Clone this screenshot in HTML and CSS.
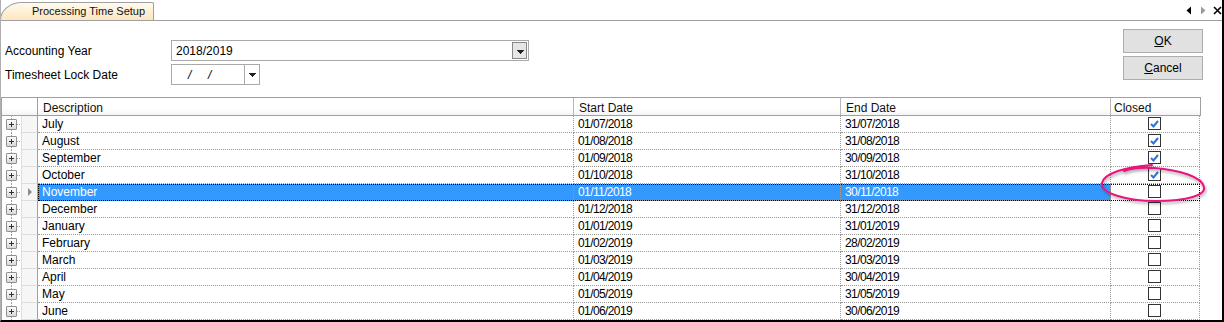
FILE: index.html
```html
<!DOCTYPE html>
<html lang="en">
    <head>
        <meta charset="UTF-8">
        <title>Processing Time Setup</title>
        <link rel="stylesheet" href="styles.css">
    </head>
    <body>
        <div class="window">
            <div class="tabbar">
                <div class="tab">Processing Time Setup</div>
                <div class="tab-nav">
                    <svg width="8" height="9" viewBox="0 0 8 9"><path d="M6 0.5 L1.5 4.5 L6 8.5 Z" fill="#000"/></svg>
                    <svg width="8" height="9" viewBox="0 0 8 9"><path d="M2 0.5 L6.5 4.5 L2 8.5 Z" fill="#9a9a9a"/></svg>
                    <svg width="9" height="9" viewBox="0 0 9 9"><path d="M1 1 L8 8 M8 1 L1 8" stroke="#000" stroke-width="1.6"/></svg>
                </div>
            </div>

            <div class="form">
                <div class="fields">
                    <div class="field-row">
                        <label class="field-label">Accounting Year</label>
                        <div class="combo combo-year">
                            <span class="combo-text">2018/2019</span>
                            <span class="drop drop-boxed"></span>
                        </div>
                    </div>
                    <div class="field-row">
                        <label class="field-label">Timesheet Lock Date</label>
                        <div class="combo combo-date">
                            <span class="combo-text date-text">/&nbsp;&nbsp;&nbsp;&nbsp;&nbsp;/</span>
                            <span class="drop drop-split"></span>
                        </div>
                    </div>
                </div>
                <div class="buttons">
                    <button class="btn"><u>O</u>K</button>
                    <button class="btn"><u>C</u>ancel</button>
                </div>
            </div>

            <div class="grid">
                <div class="hdr">
                    <div class="tree"></div>
                    <div class="rh"></div>
                    <div class="hc desc">Description</div>
                    <div class="hc start">Start Date</div>
                    <div class="hc end">End Date</div>
                    <div class="hc closed">Closed</div>
                </div>
                <div id="rows"></div>
            </div>

            <svg class="annotation" width="130" height="60" viewBox="0 0 130 60">
                <defs>
                    <filter id="shadow" x="-20%" y="-40%" width="140%" height="180%">
                        <feDropShadow dx="1" dy="2" stdDeviation="1.5" flood-color="#000" flood-opacity="0.35"/>
                    </filter>
                </defs>
                <path filter="url(#shadow)" fill="none" stroke="#e8157c" stroke-width="2" stroke-linecap="round"
                    d="M56 6 C30 8 8 14 6 24 C4 34 30 42 60 42 C92 42 110 36 108 28 C106 18 84 11 58 9 C46 8 34 10 28 12"/>
            </svg>
        </div>

        <script>
        // Rows of the grid
        const months = [
            ['July', '01/07/2018', '31/07/2018', true],
            ['August', '01/08/2018', '31/08/2018', true],
            ['September', '01/09/2018', '30/09/2018', true],
            ['October', '01/10/2018', '31/10/2018', true],
            ['November', '01/11/2018', '30/11/2018', false],
            ['December', '01/12/2018', '31/12/2018', false],
            ['January', '01/01/2019', '31/01/2019', false],
            ['February', '01/02/2019', '28/02/2019', false],
            ['March', '01/03/2019', '31/03/2019', false],
            ['April', '01/04/2019', '30/04/2019', false],
            ['May', '01/05/2019', '31/05/2019', false],
            ['June', '01/06/2019', '30/06/2019', false]
        ];
        const selected = 4;
        const check = '<svg width="9" height="8" viewBox="0 0 9 8"><path d="M1 4 L3.5 6.5 L8 1" fill="none" stroke="#2b73d6" stroke-width="2"/></svg>';

        const rows = document.getElementById('rows');
        months.forEach((m, i) => {
            const row = document.createElement('div');
            row.className = 'row' + (i === selected ? ' selected' : '');
            row.innerHTML =
                '<div class="tree"><span class="exp"></span></div>' +
                '<div class="rh">' + (i === selected ? '<span class="pointer"></span>' : '') + '</div>' +
                '<div class="cells">' +
                    '<div class="c desc">' + m[0] + '</div>' +
                    '<div class="c start date">' + m[1] + '</div>' +
                    '<div class="c end date">' + m[2] + '</div>' +
                    '<div class="c closed"><span class="cb">' + (m[3] ? check : '') + '</span></div>' +
                '</div>';
            rows.appendChild(row);
        });
    </script>
    </body>
</html>
```

FILE: styles.css
```css
body {
    margin: 0;
    font-family: "Liberation Sans", Arial, sans-serif;
    font-size: 12px;
    color: #000;
    background: #fff;
}
.window {
    position: relative;
    width: 1224px;
    height: 322px;
    box-sizing: border-box;
    border-left: 1px solid #b0b0b0;
    border-right: 2px solid #000;
    border-bottom: 2px solid #000;
    overflow: hidden;
}

/* tab strip */
.tabbar {
    display: flex;
    align-items: flex-end;
    height: 20px;
    border-bottom: 1px solid #a0a0a0;
}
.tab {
    height: 17px;
    line-height: 17px;
    padding: 0 8px 0 31px;
    margin-left: -1px;
    border: 1px solid #a0a0a0;
    border-bottom: none;
    border-top-left-radius: 22px 18px;
    border-top-right-radius: 2px;
    background: linear-gradient(#fffaf0, #fde6bd);
    color: #111;
    font-size: 11px;
}
.tab-nav {
    margin-left: auto;
    align-self: center;
    display: flex;
    gap: 6px;
    align-items: center;
}

/* form */
.form {
    display: flex;
    height: 76px;
}
.fields {
    padding: 19px 0 0 4px;
    display: flex;
    flex-direction: column;
    gap: 3px;
}
.field-row {
    display: flex;
    align-items: center;
}
.field-label {
    width: 166px;
}
.combo {
    display: flex;
    align-items: center;
    height: 21px;
    box-sizing: border-box;
    border: 1px solid #a9a9a9;
    background: #fff;
}
.combo-year {
    width: 358px;
}
.combo-date {
    width: 89px;
}
.combo-text {
    flex: 1;
    padding-left: 4px;
}
.date-text {
    padding-left: 16px;
    font-style: italic;
}
.drop {
    width: 15px;
    height: 17px;
    margin-right: 1px;
    box-sizing: border-box;
    background: linear-gradient(#222, #222) 4px 7px / 7px 1px no-repeat,
        linear-gradient(#222, #222) 5px 8px / 5px 1px no-repeat,
        linear-gradient(#222, #222) 6px 9px / 3px 1px no-repeat,
        linear-gradient(#222, #222) 7px 10px / 1px 1px no-repeat;
}
.drop-boxed {
    border: 1px solid #888;
    background-color: #e6e6e6;
}
.drop-split {
    height: 19px;
    margin-right: 0;
    border-left: 1px solid #a9a9a9;
    background-position: 4px 8px, 5px 9px, 6px 10px, 7px 11px;
}
.buttons {
    margin-left: auto;
    margin-right: 19px;
    padding-top: 8px;
    display: flex;
    flex-direction: column;
    gap: 3px;
}
.btn {
    width: 80px;
    height: 24px;
    padding: 0;
    border: 1px solid #adadad;
    background: #e1e1e1;
    font-family: inherit;
    font-size: 12px;
    color: #000;
}

/* grid */
.grid {
    width: 1199px;
    border-left: 1px solid #a0a0a0;
}
.hdr {
    display: flex;
    height: 19px;
    box-sizing: border-box;
    border-top: 1px solid #a0a0a0;
    border-bottom: 1px solid #a0a0a0;
    border-right: 1px solid #a0a0a0;
    background: linear-gradient(#fff 60%, #f4f4f4);
}
.hdr .tree {
    width: 19px;
    background: none;
}
.hdr .rh {
    border-left: none;
    border-bottom: none;
    background: none;
}
.hc {
    box-sizing: border-box;
    padding: 3px 0 0 5px;
    border-right: 1px solid #b8b8b8;
    color: #111;
}
.hc.closed {
    border-right: none;
    padding-left: 3px;
}
.desc { width: 536px; }
.start { width: 267px; }
.end { width: 270px; }
.closed { width: 89px; }

.row {
    display: flex;
    height: 17px;
}
.tree {
    width: 19px;
    flex: none;
    background: repeating-linear-gradient(#a0a0a0 0 1px, transparent 1px 2px) 9px 0 / 1px 17px no-repeat,
        repeating-linear-gradient(90deg, #a0a0a0 0 1px, transparent 1px 2px) 15px 8px / 4px 1px no-repeat;
}
.exp {
    display: block;
    width: 11px;
    height: 11px;
    margin: 3px 0 0 4px;
    box-sizing: border-box;
    border: 1px solid #909090;
    border-radius: 1px;
    background: linear-gradient(#333, #333) 2px 4px / 5px 1px no-repeat,
        linear-gradient(#333, #333) 4px 2px / 1px 5px no-repeat,
        linear-gradient(#fdfdfd, #d9d9d9);
}
.rh {
    width: 17px;
    flex: none;
    box-sizing: border-box;
    border-left: 1px solid #dedede;
    border-right: 1px solid #a0a0a0;
    border-bottom: 1px solid #dcdcdc;
    background: #f6f6f6;
    display: flex;
    align-items: center;
    justify-content: center;
}
.pointer {
    width: 0;
    height: 0;
    border-top: 4px solid transparent;
    border-bottom: 4px solid transparent;
    border-left: 4px solid #8c8c8c;
}
.cells {
    display: flex;
}
.c {
    box-sizing: border-box;
    height: 17px;
    line-height: 17px;
    padding-left: 4px;
    border-right: 1px dotted #9a9a9a;
    border-bottom: 1px dotted #9a9a9a;
    white-space: nowrap;
}
.c.date {
    letter-spacing: -0.6px;
}
.c.closed {
    display: flex;
    justify-content: center;
    align-items: center;
    padding: 0 1px 1px 0;
}
.cb {
    width: 13px;
    height: 13px;
    box-sizing: border-box;
    border: 1px solid #333;
    background: #fff;
    display: flex;
    align-items: center;
    justify-content: center;
}
.selected .cells {
    outline: 1px dotted #000;
    outline-offset: -1px;
}
.selected .desc,
.selected .start,
.selected .end {
    background: #3399ff;
    color: #fff;
}

/* hand-drawn highlight over the Closed column */
.annotation {
    position: absolute;
    left: 1095px;
    top: 159px;
}
```
